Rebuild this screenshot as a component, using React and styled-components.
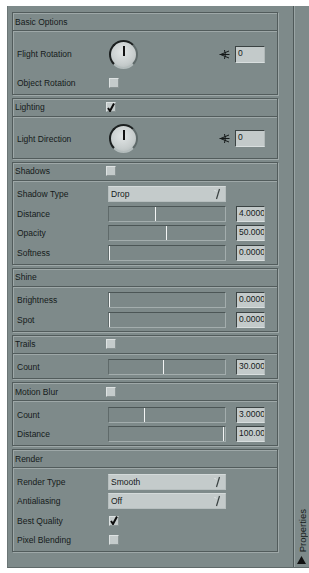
import React from 'react';
import styled, { createGlobalStyle } from 'styled-components';

const Global = createGlobalStyle`
  html, body { margin: 0; padding: 0; background: #ffffff; }
  body { font-family: "Liberation Sans", Arial, sans-serif; color: #151a1a; }
  #root { width: 309px; height: 573px; }
`;

const Frame = styled.div`
  margin: 6px 0 0 7px;
  width: 302px;
  height: 562px;
  display: flex;
  background: #7e8a8a;
  border-bottom: 1px solid #5f6969;
  border-left: 1px solid #6b7676;
  box-sizing: border-box;
`;

const Main = styled.div`
  width: 285px;
  box-sizing: border-box;
  padding: 6px 15px 0 4px;
  display: flex;
  flex-direction: column;
  gap: 3px;
`;

const Strip = styled.div`
  flex: 1;
  border-left: 1px solid #4f5959;
  box-shadow: inset 1px 0 0 #9aa5a5;
  display: flex;
  flex-direction: column;
  justify-content: flex-end;
  align-items: center;
  padding-bottom: 3px;
  gap: 4px;
`;

const StripText = styled.span`
  writing-mode: vertical-rl;
  transform: rotate(180deg);
  font-size: 9.5px;
  color: #151a1a;
  margin-left: 2px;
`;

const Group = styled.section`
  border: 1px solid #525c5c;
  box-shadow: 1px 1px 0 #9ea8a8, inset 1px 1px 0 #9ea8a8;
`;

const Header = styled.div`
  height: 17px;
  border-bottom: 1px solid #525c5c;
  box-shadow: 0 1px 0 #9ea8a8;
  display: flex;
  align-items: center;
  padding-left: 2px;
  font-size: 8.5px;
`;

const HeaderLabel = styled.span`
  width: 91px;
  flex: none;
`;

const Body = styled.div`
  padding: 4px 12px 1px 4px;
`;

const Row = styled.div`
  height: 19.5px;
  display: flex;
  align-items: center;
  font-size: 8.5px;
`;

const KnobRow = styled(Row)`
  height: ${(p) => p.$h}px;
`;

const Label = styled.span`
  width: 91px;
  flex: none;
`;

const Knob = styled.div`
  position: relative;
  width: 29px;
  height: 29px;
  margin-left: 1px;
  flex: none;
  box-sizing: border-box;
  border-radius: 50%;
  border: 2px solid;
  border-color: #1c2020 #5f6a6a #b3bcbc #1c2020;
  background: radial-gradient(circle at 45% 40%, #e2e6e6 0%, #c7cdcd 60%, #aab3b3 100%);
`;

const KnobPointer = styled.span`
  position: absolute;
  left: 50%;
  top: 4px;
  width: 2px;
  height: 10px;
  margin-left: -1px;
  background: #111;
`;

const Spacer = styled.span`
  flex: 1;
`;

const AngleIcon = styled.svg`
  width: 11px;
  height: 11px;
  margin-right: 5px;
  flex: none;
`;

const NumBox = styled.div`
  width: ${(p) => p.$w}px;
  height: ${(p) => p.$hgt}px;
  flex: none;
  box-sizing: border-box;
  background: #c3caca;
  border-top: 1px solid #3b4343;
  border-left: 1px solid #3b4343;
  border-bottom: 1px solid #d9dfdf;
  border-right: 1px solid #b0b8b8;
  font-size: 8.5px;
  line-height: 11px;
  padding: 1px 0 0 2px;
  overflow: hidden;
  white-space: nowrap;
`;

const Track = styled.div`
  position: relative;
  width: 118px;
  height: 16px;
  flex: none;
  box-sizing: border-box;
  background: #7c8888;
  border-top: 1px solid #4c5656;
  border-left: 1px solid #5f6a6a;
  border-bottom: 1px solid #a3adad;
  border-right: 1px solid #a3adad;
  margin-right: 10px;
`;

const Thumb = styled.span`
  position: absolute;
  top: 0;
  bottom: 0;
  width: 1px;
  background: #f2f4f4;
  left: ${(p) => p.$pos}%;
  margin-left: ${(p) => (p.$pos >= 100 ? -2 : 0)}px;
`;

const Dropdown = styled.div`
  width: 118px;
  height: 16px;
  flex: none;
  box-sizing: border-box;
  background: #c4cbcb;
  border: 1px solid #b7bfbf;
  border-top-color: #d4dada;
  display: flex;
  align-items: center;
  padding: 0 4px 0 2px;
  font-size: 8.5px;
`;

const DropArrow = styled.svg`
  width: 8px;
  height: 12px;
  margin-left: auto;
`;

const Check = styled.span`
  width: 10px;
  height: 10px;
  flex: none;
  box-sizing: border-box;
  margin-left: ${(p) => (p.$inHeader ? 0 : 1)}px;
  background: #c4cbcb;
  border: 1px solid;
  border-color: #dde2e2 #8a9494 #8a9494 #dde2e2;
  display: flex;
  align-items: center;
  justify-content: center;
`;

const Angle = () => (
  <AngleIcon viewBox="0 0 11 11">
    <path d="M10 2 L1.5 5.5 L10 9" stroke="#151919" strokeWidth="1" fill="none" />
    <path d="M0.5 5.5 H10.5" stroke="#151919" strokeWidth="1" fill="none" />
    <path d="M5.5 1 Q7.2 5.5 5.5 10" stroke="#151919" strokeWidth="1" fill="none" />
  </AngleIcon>
);

const CheckBox = ({ checked, inHeader }) => (
  <Check $inHeader={inHeader}>
    {checked && (
      <svg width="8" height="9" viewBox="0 0 8 9">
        <path d="M1 5 L3 8 L7 0.5" stroke="#0c0c0c" strokeWidth="2" fill="none" />
      </svg>
    )}
  </Check>
);

const Select = ({ value }) => (
  <Dropdown>
    <span>{value}</span>
    <DropArrow viewBox="0 0 8 12">
      <path d="M1.5 2 L3 3.5" stroke="#e8ecec" strokeWidth="1" />
      <path d="M6.5 1 L3.5 11" stroke="#3a4242" strokeWidth="1.2" />
    </DropArrow>
  </Dropdown>
);

const SliderRow = ({ label, pos, value }) => (
  <Row>
    <Label>{label}</Label>
    <Track>
      <Thumb $pos={pos} />
    </Track>
    <NumBox $w={29} $hgt={16}>{value}</NumBox>
  </Row>
);

const KnobLine = ({ label, h }) => (
  <KnobRow $h={h}>
    <Label>{label}</Label>
    <Knob>
      <KnobPointer />
    </Knob>
    <Spacer />
    <Angle />
    <NumBox $w={30} $hgt={17}>0</NumBox>
  </KnobRow>
);

const Panel = ({ title, check, children }) => (
  <Group>
    <Header>
      <HeaderLabel>{title}</HeaderLabel>
      {check !== undefined && <CheckBox checked={check} inHeader />}
    </Header>
    <Body>{children}</Body>
  </Group>
);

export default function App() {
  return (
    <>
      <Global />
      <Frame>
        <Main>
          <Panel title="Basic Options">
            <KnobLine label="Flight Rotation" h={38} />
            <Row>
              <Label>Object Rotation</Label>
              <CheckBox checked={false} />
            </Row>
          </Panel>
          <Panel title="Lighting" check={true}>
            <KnobLine label="Light Direction" h={36} />
          </Panel>
          <Panel title="Shadows" check={false}>
            <Row>
              <Label>Shadow Type</Label>
              <Select value="Drop" />
            </Row>
            <SliderRow label="Distance" pos={40} value="4.000000" />
            <SliderRow label="Opacity" pos={49} value="50.00000" />
            <SliderRow label="Softness" pos={0} value="0.000000" />
          </Panel>
          <Panel title="Shine">
            <SliderRow label="Brightness" pos={0} value="0.000000" />
            <SliderRow label="Spot" pos={0} value="0.000000" />
          </Panel>
          <Panel title="Trails" check={false}>
            <SliderRow label="Count" pos={46.5} value="30.00000" />
          </Panel>
          <Panel title="Motion Blur" check={false}>
            <SliderRow label="Count" pos={30} value="3.000000" />
            <SliderRow label="Distance" pos={100} value="100.0000" />
          </Panel>
          <Panel title="Render">
            <Row>
              <Label>Render Type</Label>
              <Select value="Smooth" />
            </Row>
            <Row>
              <Label>Antialiasing</Label>
              <Select value="Off" />
            </Row>
            <Row>
              <Label>Best Quality</Label>
              <CheckBox checked={true} />
            </Row>
            <Row>
              <Label>Pixel Blending</Label>
              <CheckBox checked={false} />
            </Row>
          </Panel>
        </Main>
        <Strip>
          <StripText>Properties</StripText>
          <svg width="9" height="8" viewBox="0 0 9 8">
            <path d="M4.5 0 L9 8 L0 8 Z" fill="#111" />
          </svg>
        </Strip>
      </Frame>
    </>
  );
}
